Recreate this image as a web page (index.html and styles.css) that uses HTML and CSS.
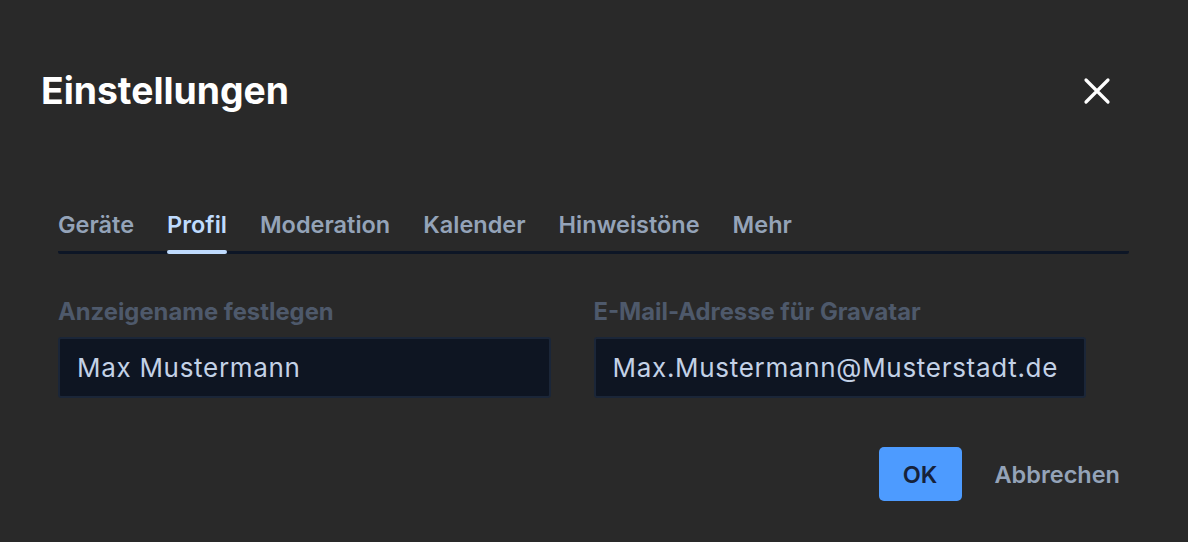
FILE: index.html
```html
<!DOCTYPE html>
<html lang="de">
<head>
    <meta charset="UTF-8">
    <meta name="viewport" content="width=device-width, initial-scale=1.0">
    <title>Einstellungen</title>
    <link rel="stylesheet" href="styles.css">
</head>
<body>
    <div class="dialog">
        <div class="dialog-header">
            <h1 class="dialog-title">Einstellungen</h1>
            <button class="close-btn" type="button" aria-label="Schließen">
                <svg width="28" height="28" viewBox="0 0 28 28">
                    <path d="M3 3 L25 25 M25 3 L3 25" stroke="#ffffff" stroke-width="3.2" stroke-linecap="round" fill="none"/>
                </svg>
            </button>
        </div>

        <div class="dialog-body">
            <nav class="tabs">
                <a class="tab">Geräte</a>
                <a class="tab active">Profil</a>
                <a class="tab">Moderation</a>
                <a class="tab">Kalender</a>
                <a class="tab">Hinweistöne</a>
                <a class="tab">Mehr</a>
            </nav>

            <form class="profile-form">
                <div class="field">
                    <label for="displayName">Anzeigename festlegen</label>
                    <input type="text" id="displayName" value="Max Mustermann">
                </div>
                <div class="field">
                    <label for="email">E-Mail-Adresse für Gravatar</label>
                    <input type="text" id="email" value="Max.Mustermann@Musterstadt.de">
                </div>
            </form>

            <div class="dialog-footer">
                <button class="btn btn-primary" type="button">OK</button>
                <button class="btn btn-link" type="button">Abbrechen</button>
            </div>
        </div>
    </div>
</body>
</html>
```

FILE: styles.css
```css
body {
    margin: 0;
    padding: 0;
    background-color: #292929;
    font-family: Inter, "Noto Sans", Arial, sans-serif;
    width: 1188px;
    height: 542px;
    overflow: hidden;
}

.dialog {
    padding: 68px 59px 0 41px;
}

.dialog-header {
    display: flex;
    justify-content: space-between;
    align-items: center;
}

.dialog-title {
    margin: 0;
    font-size: 37.3px;
    line-height: 46px;
    font-weight: 700;
    color: #ffffff;
}

.close-btn {
    background: none;
    border: none;
    padding: 0;
    margin-right: 18px;
    width: 28px;
    height: 28px;
    cursor: pointer;
}

.dialog-body {
    margin-left: 17px;
    margin-top: 97px;
}

.tabs {
    display: flex;
    gap: 33px;
    border-bottom: 3px solid #0d1626;
    border-radius: 2px;
}

.tab {
    position: relative;
    font-size: 23.5px;
    font-weight: 600;
    line-height: 28px;
    color: #94a3b8;
    padding-bottom: 12px;
    cursor: pointer;
}

.tab.active {
    color: #bfdbfe;
}

.tab.active::after {
    content: "";
    position: absolute;
    left: 0;
    right: 0;
    bottom: -3px;
    height: 4px;
    border-radius: 2px;
    background-color: #bfdbfe;
}

.profile-form {
    display: grid;
    grid-template-columns: 1fr 1fr;
    gap: 43px;
    margin-top: 45px;
    margin-right: 43px;
}

.field label {
    display: block;
    font-size: 23.8px;
    font-weight: 700;
    line-height: 26px;
    color: #4e596b;
    margin-bottom: 12px;
}

.field input {
    box-sizing: border-box;
    width: 100%;
    height: 61px;
    padding: 0 17px;
    background-color: #0e1522;
    border: 2px solid #1b2638;
    border-radius: 3px;
    color: #c3d1e6;
    font-family: inherit;
    font-size: 26px;
    letter-spacing: 0.7px;
    outline: none;
}

.dialog-footer {
    display: flex;
    justify-content: flex-end;
    align-items: center;
    gap: 24px;
    margin-top: 49px;
}

.btn {
    font-family: inherit;
    font-size: 23.5px;
    font-weight: 600;
    border: none;
    cursor: pointer;
}

.btn-primary {
    width: 83px;
    height: 54px;
    border-radius: 5px;
    background-color: #4d9bff;
    color: #16223a;
}

.btn-link {
    background: none;
    color: #94a3b8;
    padding: 0 9px;
    height: 54px;
}
```
